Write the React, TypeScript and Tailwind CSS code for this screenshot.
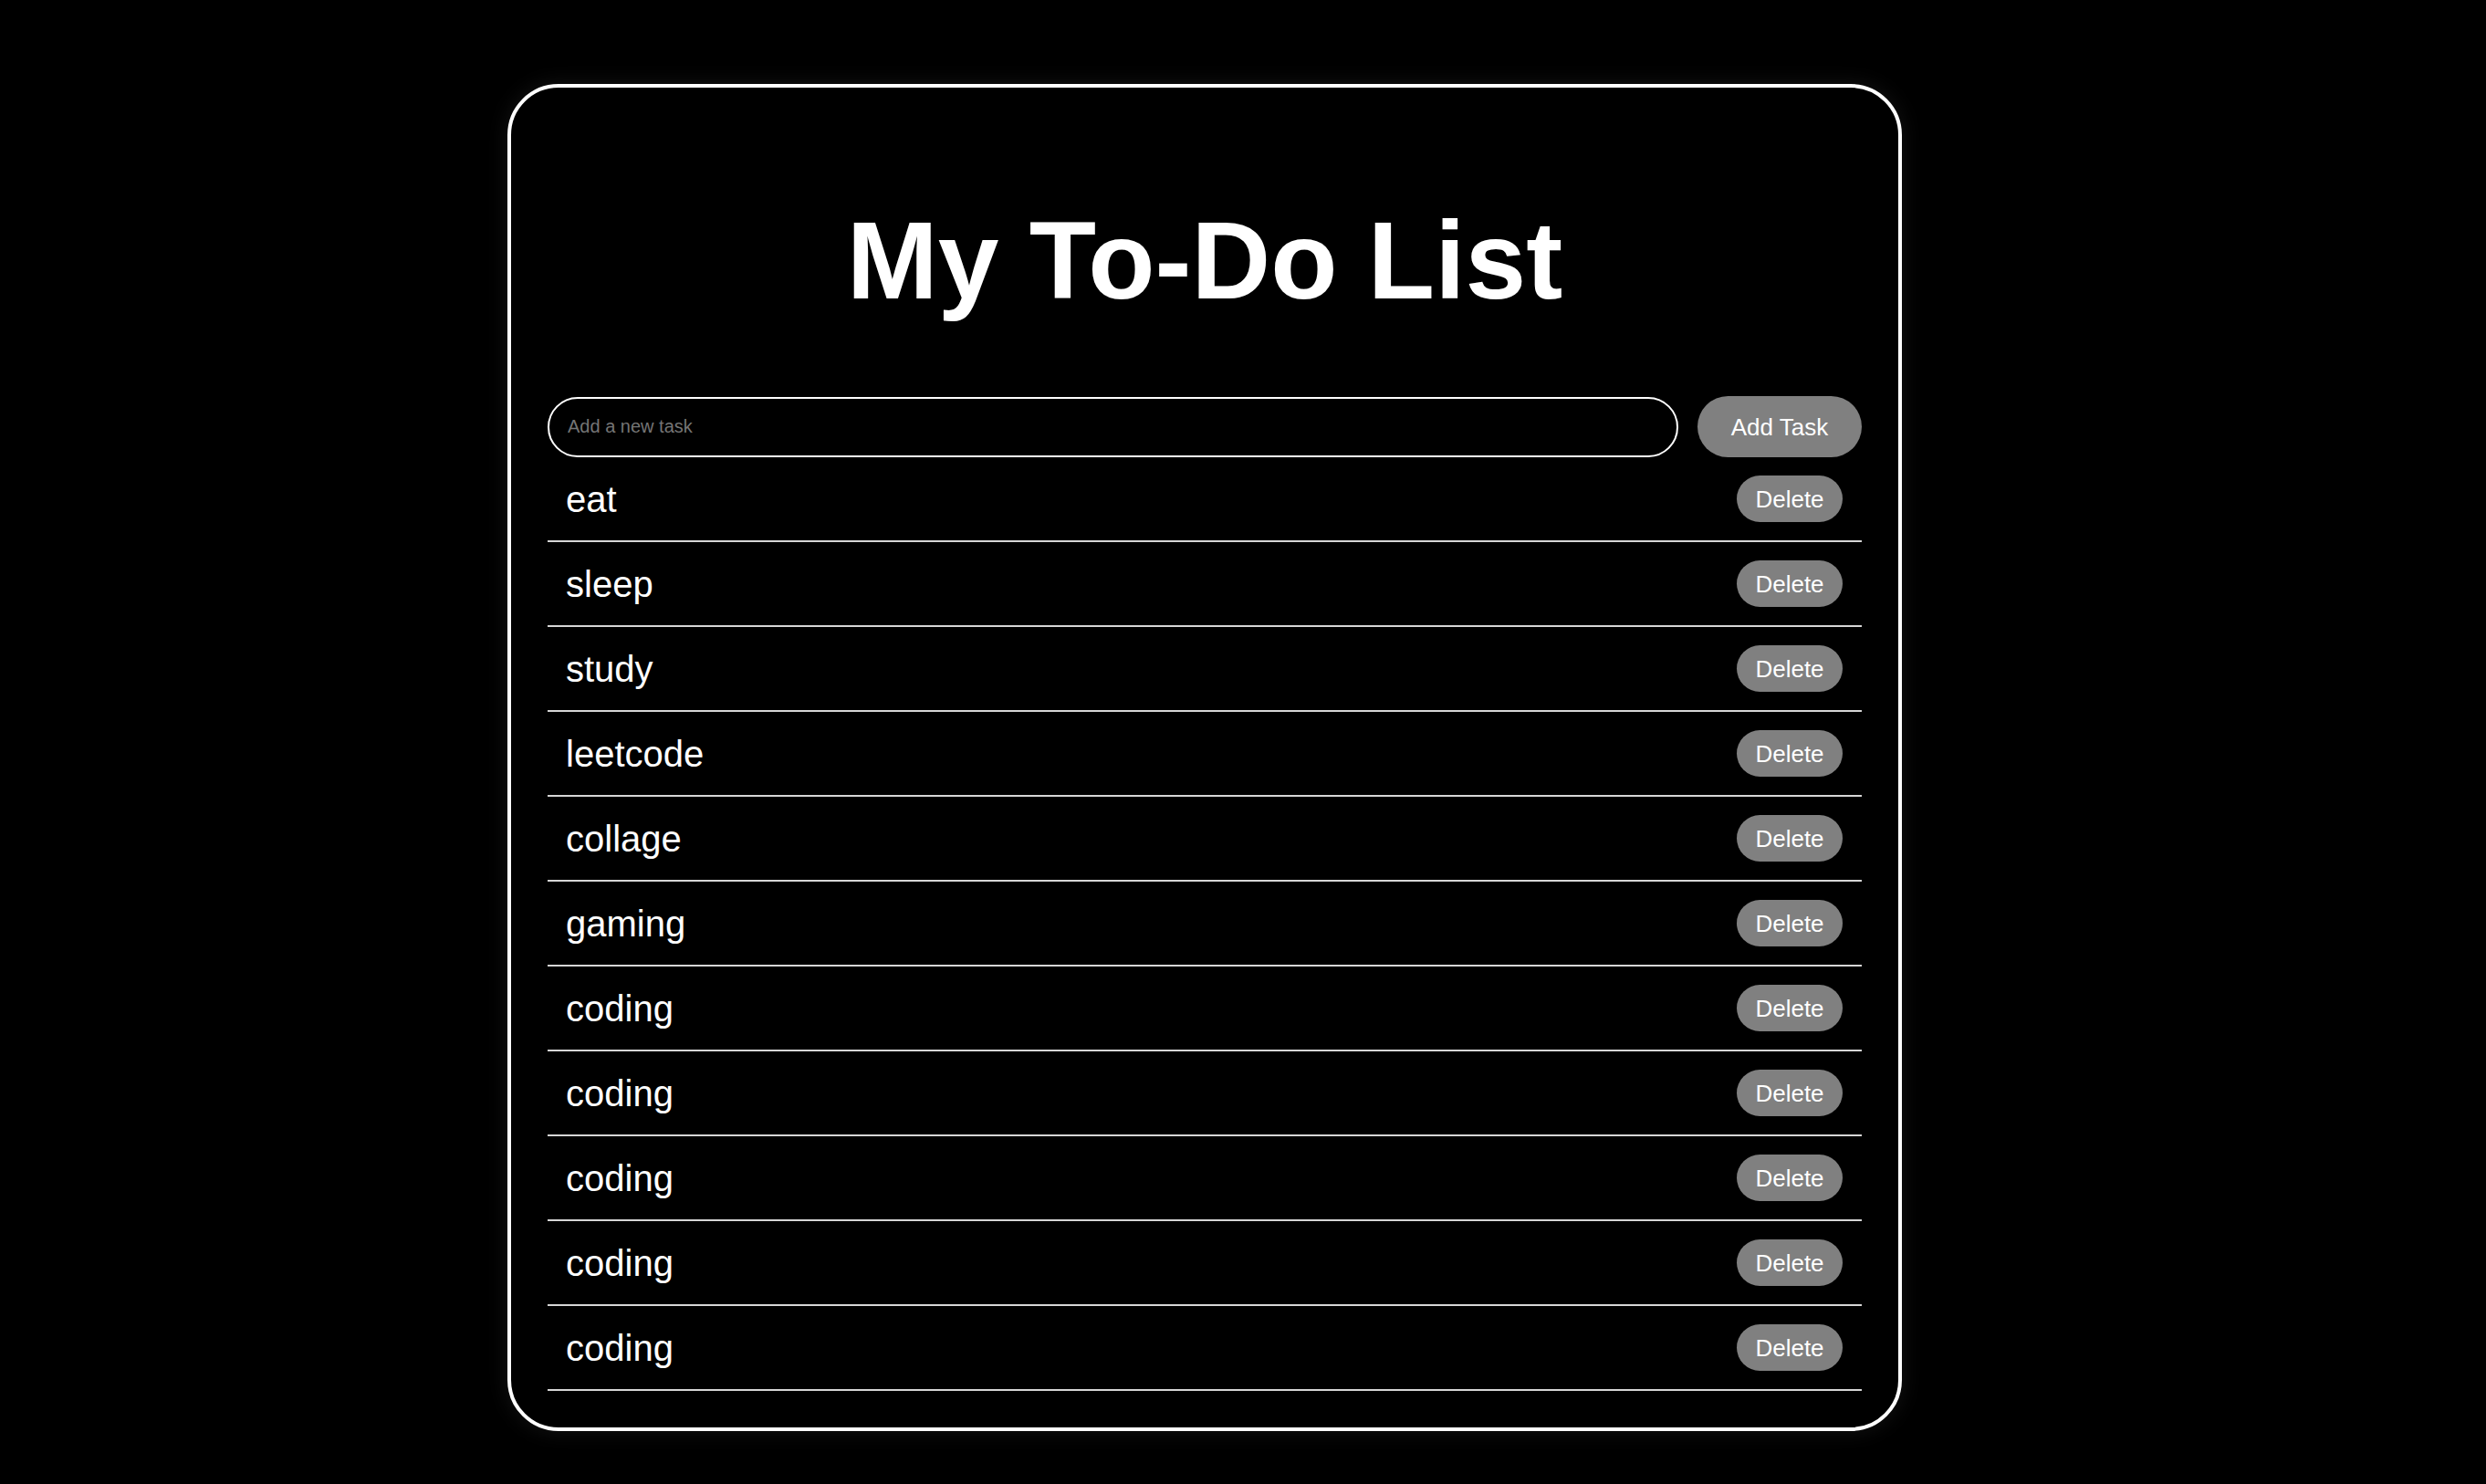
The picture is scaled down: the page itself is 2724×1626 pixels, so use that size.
import {useState} from "react";

// ------------------------------------------------------------------------------------------------

const initialTasks = [
  "eat",
  "sleep",
  "study",
  "leetcode",
  "collage",
  "gaming",
  "coding",
  "coding",
  "coding",
  "coding",
  "coding",
];

// ------------------------------------------------------------------------------------------------

function TaskRow({text, onDelete}: {text: string; onDelete: () => void}) {
  return (
    <li className="flex h-[93px] items-center justify-between border-b-2 border-[#d6d6d6] pl-[20px] pr-[21px]">
      <span className="text-[40px] leading-none text-white">{text}</span>
      <button
        onClick={onDelete}
        className="h-[51px] w-[116px] rounded-full bg-[#808080] text-[26px] leading-none text-white">
        Delete
      </button>
    </li>
  );
}

// ------------------------------------------------------------------------------------------------

export default function App() {
  const [tasks, setTasks] = useState(initialTasks);
  const [draft, setDraft] = useState("");

  const addTask = () => {
    if (!draft.trim()) return;
    setTasks([...tasks, draft.trim()]);
    setDraft("");
  };

  return (
    <div className="min-h-[1626px] bg-black pt-[92px] font-['Liberation_Sans',Arial,sans-serif]">
      <div className="ml-[556px] w-[1528px] rounded-[56px] border-4 border-white bg-black p-[40px] shadow-[0_0_24px_rgba(255,255,255,0.08)]">
        <h1 className="my-[80px] text-center text-[120px] font-bold leading-[1.15] text-white">My To-Do List</h1>
        <div className="flex items-center gap-[21px]">
          <input
            value={draft}
            onChange={(e) => setDraft(e.target.value)}
            placeholder="Add a new task"
            className="h-[66px] w-[1239px] rounded-full border-2 border-white bg-black px-[20px] text-[20px] text-white outline-none placeholder:text-[#757575]"
          />
          <button
            onClick={addTask}
            className="h-[67px] w-[180px] rounded-full bg-[#808080] text-[26px] leading-none text-white">
            Add Task
          </button>
        </div>
        <ul>
          {tasks.map((task, index) => (
            <TaskRow key={index} text={task} onDelete={() => setTasks(tasks.filter((_, i) => i !== index))} />
          ))}
        </ul>
      </div>
    </div>
  );
}

// ------------------------------------------------------------------------------------------------
